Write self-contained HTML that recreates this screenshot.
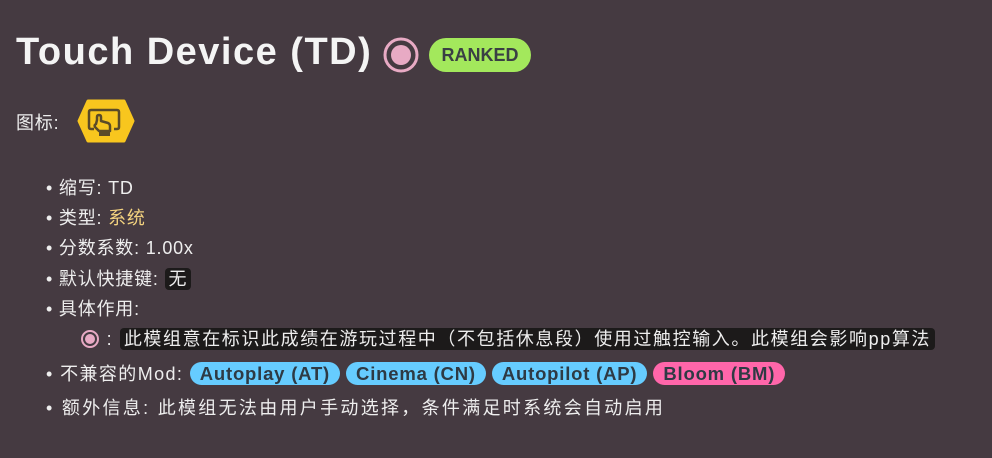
<!DOCTYPE html>
<html><head><meta charset="utf-8"><style>
body{margin:0;width:992px;height:458px;background:#453a41;color:#eee;font-family:"Liberation Sans","Noto Sans CJK SC",sans-serif;position:relative;overflow:hidden}
.a{position:absolute;white-space:nowrap}
h1{position:absolute;left:16px;top:31px;margin:0;font-size:38px;font-weight:bold;color:#f4f4f4;letter-spacing:1.5px}
.l{position:absolute;left:46px;font-size:18px;line-height:22px;white-space:nowrap;letter-spacing:1.6px}
.pill{display:inline-block;border-radius:12px;padding:0 10px;font-weight:bold;color:#2e3a44;line-height:23px;height:23px;margin-right:6px;letter-spacing:0.8px;font-size:18.5px}
.code{background:#1c1a1a;border-radius:4px;padding:1px 4px}
</style></head><body>
<h1>Touch Device (TD)</h1>
<svg class="a" style="left:383px;top:37px" width="36" height="36"><circle cx="18" cy="18" r="16" fill="none" stroke="#e8aac4" stroke-width="3"/><circle cx="18" cy="18" r="10" fill="#e8aac4"/></svg>
<div class="a" style="left:429px;top:38px;width:102px;height:34px;border-radius:17px;background:#a3e85c;color:#3a3f44;font-weight:bold;font-size:18px;line-height:34px;text-align:center">RANKED</div>
<div class="a" style="left:16px;top:109px;font-size:18px;letter-spacing:0.8px">图标:</div>
<svg class="a" style="left:74px;top:96px" width="64" height="50" viewBox="0 0 64 50"><polygon points="14,5 50,5 59,25 50,45 14,45 5,25" fill="#f8c61e" stroke="#f8c61e" stroke-width="3" stroke-linejoin="round"/><path d="M20 33 h-3 q-2 0 -2 -2 v-15 q0 -2 2 -2 h26 q2 0 2 2 v15 q0 2 -2 2 h-3" fill="none" stroke="#5a4a28" stroke-width="2.5"/><path d="M23 24 v-3 q0 -2 2 -2 q2 0 2 2 v4 l7 2 q2 1 2 3 v5 h-11 l-4 -4 q-1 -2 1 -3 z" fill="none" stroke="#5a4a28" stroke-width="2.5" stroke-linejoin="round"/><rect x="25" y="36" width="11" height="4" fill="#5a4a28"/></svg>
<div class="l" style="top:177px;letter-spacing:0.8px">• 缩写: TD</div>
<div class="l" style="top:207px;letter-spacing:0.8px">• 类型: <span style="color:#f3d27f">系统</span></div>
<div class="l" style="top:237px;letter-spacing:0.8px">• 分数系数: 1.00x</div>
<div class="l" style="top:268px;letter-spacing:0.8px">• 默认快捷键: <span class="code">无</span></div>
<div class="l" style="top:298px;letter-spacing:0.8px">• 具体作用:</div>
<div class="l" style="left:80px;top:328px"><svg width="20" height="20" style="vertical-align:-4px"><circle cx="10" cy="10" r="8" fill="none" stroke="#e8aac4" stroke-width="2"/><circle cx="10" cy="10" r="5" fill="#e8aac4"/></svg> : <span class="code">此模组意在标识此成绩在游玩过程中（不包括休息段）使用过触控输入。此模组会影响pp算法</span></div>
<div class="l" style="top:362px;letter-spacing:1.4px">• 不兼容的Mod: <span class="pill" style="background:#66ccff">Autoplay (AT)</span><span class="pill" style="background:#66ccff">Cinema (CN)</span><span class="pill" style="background:#66ccff">Autopilot (AP)</span><span class="pill" style="background:#ff66aa">Bloom (BM)</span></div>
<div class="l" style="top:397px;letter-spacing:2.3px">• 额外信息: 此模组无法由用户手动选择，条件满足时系统会自动启用</div>
</body></html>
